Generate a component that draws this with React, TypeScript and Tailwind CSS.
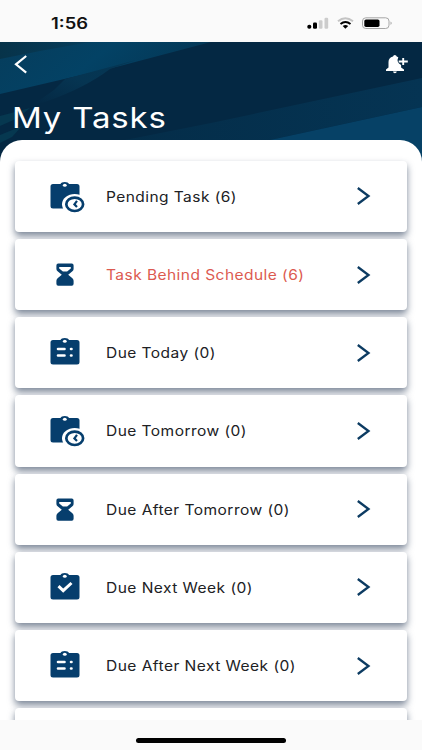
import React from "react";

type IconKind = "clock" | "hourglass" | "list" | "check";

const tasks: { label: string; icon: IconKind; alert?: boolean; width: string }[] = [
  { label: "Pending Task (6)", icon: "clock", width: "130.5" },
  { label: "Task Behind Schedule (6)", icon: "hourglass", alert: true, width: "198" },
  { label: "Due Today (0)", icon: "list", width: "109.5" },
  { label: "Due Tomorrow (0)", icon: "clock", width: "140.5" },
  { label: "Due After Tomorrow (0)", icon: "hourglass", width: "183.5" },
  { label: "Due Next Week (0)", icon: "check", width: "146.5" },
  { label: "Due After Next Week (0)", icon: "list", width: "189.5" },
];

const clipboard =
  "M3 4H10.5C11 1.2 18.5 1.2 19 4H27Q29.5 4 29.5 6.5V26Q29.5 28.5 27 28.5H3Q.5 28.5 .5 26V6.5Q.5 4 3 4Z";

function TaskIcon({ kind }: { kind: IconKind }) {
  if (kind === "hourglass") {
    return (
      <svg className="ml-[6px] h-[24px] w-[18px]" viewBox="0 0 18 24" fill="#063e6d">
        <path
          fillRule="evenodd"
          d="M2.2 .5H15.8Q17.6 .5 17.6 2.5V6.1Q17.6 7.3 16.4 8.3L12.2 11.7L16.4 15.2Q17.6 16.2 17.6 17.8V20.8Q17.6 22.8 15.8 22.8H2.2Q.4 22.8 .4 20.8V17.8Q.4 16.2 1.6 15.2L5.8 11.7L1.6 8.3Q.4 7.3 .4 6.1V2.5Q.4 .5 2.2 .5ZM3.2 4V5.4L6.9 8.6H11.1L14.8 5.4V4Z"
        />
      </svg>
    );
  }
  return (
    <svg className="h-[34px] w-[36px] shrink-0" viewBox="0 0 36 34" fill="#063e6d">
      <path d={clipboard} />
      <ellipse cx="14.8" cy="5.2" rx="1.9" ry="1.5" fill="white" />
      {kind === "clock" && (
        <>
          <ellipse cx="24.7" cy="24.3" rx="12.7" ry="10.3" fill="white" />
          <ellipse cx="24.7" cy="24.3" rx="8.4" ry="6.7" fill="white" stroke="#063e6d" strokeWidth="2.7" />
          <path d="M27 20.8L24.4 24.3L27 27" fill="none" stroke="#063e6d" strokeWidth="2.2" />
        </>
      )}
      {kind === "list" && (
        <path
          d="M8 13H14.5M8 19.5H14.5M21 13H21.5M21 19.5H21.5"
          stroke="white"
          strokeWidth="2.6"
          strokeLinecap="round"
        />
      )}
      {kind === "check" && (
        <path d="M8.5 15.2L13.2 19.6L21.5 12" fill="none" stroke="white" strokeWidth="3" />
      )}
    </svg>
  );
}

function StretchedText({
  children,
  width,
  size,
  fill,
  weight,
  spacing,
}: {
  children: string;
  width: string;
  size: number;
  fill: string;
  weight: number;
  spacing: number;
}) {
  return (
    <svg className="block h-[1.5em] overflow-visible" style={{ width: Number(width), fontSize: size }}>
      <text
        y="1.08em"
        fill={fill}
        fontWeight={weight}
        textLength={Number(width) + spacing}
        lengthAdjust="spacingAndGlyphs"
        letterSpacing={spacing}
      >
        {children}
      </text>
    </svg>
  );
}

function StatusBar() {
  return (
    <div className="flex h-[42px] shrink-0 items-start bg-[#fafafa] pl-[51px] pr-[28px]">
      <div className="pt-[12px]">
        <StretchedText width="37" size={15.5} fill="#111" weight={600} spacing={0}>
          1:56
        </StretchedText>
      </div>
      <svg className="ml-auto mt-[16px] h-[14px] w-[87px]" viewBox="0 0 87 14">
        <rect x="0.3" y="8.8" width="4" height="4" rx="1.8" />
        <rect x="6" y="6.5" width="4" height="6.3" rx="1.2" />
        <rect x="11.8" y="4.2" width="3.7" height="8.6" rx="1.2" fill="#ccc" />
        <rect x="17.5" y="1.8" width="3.7" height="11" rx="1.2" fill="#ccc" />
        <path d="M31 5.2Q38.2-.7 46 5.2" fill="none" stroke="#c4c4c4" strokeWidth="2" />
        <path d="M33.5 8Q38.4 4.1 43.5 8" fill="none" stroke="black" strokeWidth="2" />
        <path d="M35.7 10.1Q38.4 8.1 41.2 10.1L38.4 12.8Z" />
        <rect x="55.5" y="1.8" width="26.5" height="10.7" rx="3.3" fill="none" stroke="#a6a6a6" />
        <rect x="57.3" y="3.4" width="15.2" height="7.6" rx="1.7" />
        <path d="M83.5 5.4Q86 7.1 83.5 8.9Z" fill="#aaa" />
      </svg>
    </div>
  );
}

function Header() {
  return (
    <header className="relative h-[120px] shrink-0 overflow-hidden bg-[#042843]">
      <svg className="absolute inset-0 h-full w-full" viewBox="0 0 422 120" preserveAspectRatio="none">
        <defs>
          <linearGradient id="leaf" x1="0" y1="0" x2="1" y2="0.3">
            <stop offset="0" stopColor="#063d5c" />
            <stop offset=".5" stopColor="#034265" />
            <stop offset="1" stopColor="#043654" />
          </linearGradient>
          <linearGradient id="ray" x1="1" y1="0" x2="0" y2="1">
            <stop offset="0" stopColor="#043654" />
            <stop offset=".5" stopColor="#063552" />
            <stop offset="1" stopColor="#042843" />
          </linearGradient>
          <linearGradient id="shade" x1="0" y1="0" x2="1" y2="0">
            <stop offset="0" stopColor="#073349" />
            <stop offset="1" stopColor="#063d5c" />
          </linearGradient>
          <linearGradient id="beam" x1="0" y1="0" x2="1" y2="0">
            <stop offset="0" stopColor="#042d49" />
            <stop offset="1" stopColor="#053453" />
          </linearGradient>
        </defs>
        <path d="M0 0H211L120 24Q60 38 0 52Z" fill="url(#leaf)" />
        <path d="M0 0H90L40 9L0 17Z" fill="url(#shade)" />
        <path d="M136 18L110 27Q85 46 45 60L34 62L54 48L65 37Z" fill="url(#ray)" />
        <path d="M0 74L30 66L18 76L0 84Z" fill="#063850" />
        <path d="M0 93L22 84L12 95L0 101Z" fill="#063850" />
        <path d="M422 36L211 81L125 98H270L422 65Z" fill="url(#beam)" />
        <path d="M422 65L270 98V120H422Z" fill="#064166" />
      </svg>
      <div className="relative flex h-full flex-col pl-[12px] pr-[13px] pt-[12px]">
        <div className="flex h-[24px] items-start justify-between">
          <svg className="ml-[2px] h-[20px] w-[14px]" viewBox="0 0 14 20" fill="none" stroke="white" strokeWidth="2.2">
            <path d="M12.2 2L2 10.3L12.2 18.6" />
          </svg>
          <svg className="mt-[1px] h-[19px] w-[24px]" viewBox="0 0 24 19" fill="white">
            <path d="M9.8 0Q11.4 0 11.7 1.6L13.3 2.3Q11 7.2 16.1 10V12.5L19 14.5V16H1V14.5L3.5 12.5V7Q3.5 3 8 1.6Q8.3 0 9.8 0ZM8 16.5H11.8Q11.6 18.2 9.9 18.2Q8.2 18.2 8 16.5Z" />
            <path d="M18.2 3V10M13.7 6.5H22.8" stroke="white" strokeWidth="1.9" />
          </svg>
        </div>
        <h1 className="mt-[19px] -ml-[0.5px]">
          <StretchedText width="154" size={28.5} fill="white" weight={400} spacing={0.7}>
            My Tasks
          </StretchedText>
        </h1>
      </div>
    </header>
  );
}

export default function App() {
  return (
    <div className="flex h-[750px] w-[422px] flex-col overflow-hidden bg-white font-['Inter',sans-serif]">
      <StatusBar />
      <Header />
      <main className="relative -mt-[22.5px] min-h-0 flex-1 overflow-hidden rounded-t-[22px] bg-white px-[15px] pt-[21.3px]">
        <div className="flex flex-col gap-[7px]">
          {tasks.map((task) => (
            <div
              key={task.label}
              className="relative flex h-[71.2px] items-center rounded-[4px] bg-white pl-[35px] pr-[36px] shadow-[0_4px_7px_0px_rgba(30,49,78,0.58)]"
            >
              <div className="w-[56px] shrink-0 pt-[1px]">
                <TaskIcon kind={task.icon} />
              </div>
              <div className="pt-[2px]">
                <StretchedText
                  width={task.width}
                  size={14}
                  fill={task.alert ? "#dc5a50" : "#202124"}
                  weight={400}
                  spacing={0.4}
                >
                  {task.label}
                </StretchedText>
              </div>
              <svg className="ml-auto h-[18px] w-[15px]" viewBox="0 0 15 18" fill="none" stroke="#0c3b62" strokeWidth="2.3">
                <path d="M1.8 1L12.5 9L1.8 17" />
              </svg>
            </div>
          ))}
          <div className="relative h-[71.2px] shrink-0 rounded-[4px] bg-white shadow-[0_4px_7px_0px_rgba(30,49,78,0.58)]" />
        </div>
      </main>
      <footer className="relative flex h-[30px] shrink-0 justify-center bg-[#fafafa] pt-[18px]">
        <div className="h-[4.5px] w-[150px] rounded-full bg-black" />
      </footer>
    </div>
  );
}
